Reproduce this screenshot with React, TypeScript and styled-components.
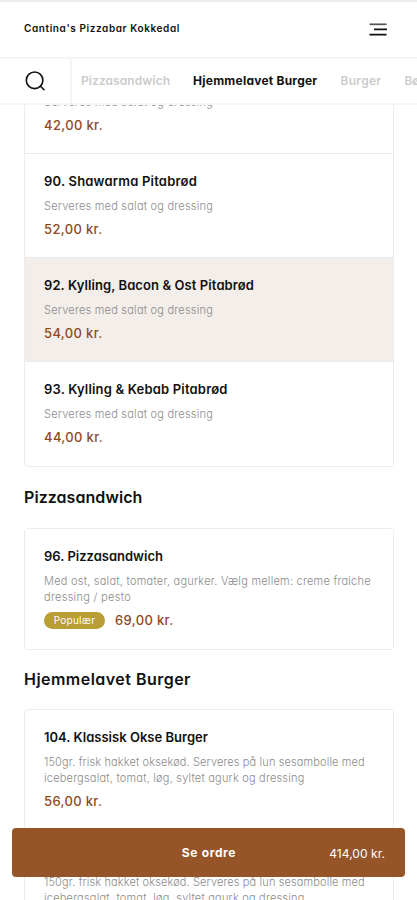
import React from 'react';
import styled, { createGlobalStyle } from 'styled-components';

const GlobalStyle = createGlobalStyle`
  * { box-sizing: border-box; }
  body {
    margin: 0;
    background: #fff;
    color: #111;
    font-family: Inter, "Open Sans", sans-serif;
    font-feature-settings: "cv11";
  }
  h1, h2, h3, p { margin: 0; white-space: nowrap; }
  button { font: inherit; font-feature-settings: inherit; border: 0; padding: 0; background: none; color: inherit; }
`;

const Page = styled.div`
  display: flex;
  flex-direction: column;
  height: 900px;
  overflow: hidden;
`;

const Header = styled.header`
  display: flex;
  flex: none;
  align-items: center;
  justify-content: space-between;
  height: 59px;
  padding: 0 30px 0 24px;
  border-top: 2px solid #ededed;
  border-bottom: 2px solid #f5f5f5;
`;

const Brand = styled.h1`
  font-size: 10px;
  line-height: 16px;
  font-weight: 600;
  letter-spacing: 0.6px;
  margin-bottom: 3px;
`;

const MenuButton = styled.button`
  display: flex;
`;

const CategoryBar = styled.nav`
  display: flex;
  flex: none;
  height: 46px;
  border-bottom: 2px solid #f5f5f5;
`;

const SearchButton = styled.button`
  display: flex;
  flex: none;
  align-items: center;
  width: 72px;
  padding-left: 24px;
  border-right: 2px solid #f5f5f5;
`;

const Tabs = styled.div`
  display: flex;
  align-items: center;
  gap: 23px;
  padding-left: 9px;
  overflow: hidden;
`;

const Tab = styled.a<{ $active?: boolean; $spacing?: number }>`
  flex: none;
  font-size: 12px;
  line-height: 18px;
  font-weight: ${(p) => (p.$active ? 700 : 600)};
  letter-spacing: ${(p) => p.$spacing ?? 0}px;
  color: ${(p) => (p.$active ? '#111' : '#cbcbcb')};
`;

const Menu = styled.main`
  flex: 1;
  min-height: 0;
  overflow: hidden;
  padding: 0 23px 0 24px;
`;

const Section = styled.section`
  &:first-child { margin-top: -56px; }
`;

const SectionTitle = styled.h2<{ $spacing: number; $compact?: boolean }>`
  padding: ${(p) => (p.$compact ? '17px 0 18px' : '18px 0 19px')};
  font-size: 16px;
  line-height: 24px;
  font-weight: 600;
  letter-spacing: ${(p) => p.$spacing}px;
`;

const Card = styled.div`
  border: 1px solid #ececec;
  border-radius: 4px;
  overflow: hidden;
`;

const Item = styled.article<{ $selected?: boolean }>`
  padding: 17px 19px 18px;
  background: ${(p) => (p.$selected ? '#f3eee9' : '#fff')};
  & + & { border-top: 1px solid #e9e9e9; }
  &:last-child { padding-bottom: 19px; }
`;

const ItemTitle = styled.h3<{ $spacing: number }>`
  font-size: 13px;
  line-height: 20px;
  font-weight: 600;
  letter-spacing: ${(p) => p.$spacing}px;
`;

const Description = styled.div`
  margin: 7px 0 5px;
`;

const DescriptionLine = styled.p<{ $spacing: number }>`
  font-size: 11px;
  line-height: 16px;
  font-weight: 300;
  letter-spacing: ${(p) => p.$spacing}px;
  color: #8b8b8b;
`;

const PriceRow = styled.div`
  display: flex;
  align-items: center;
  gap: 10px;
  height: 20px;
`;

const Badge = styled.span`
  width: 61px;
  height: 17px;
  border-radius: 9px;
  background: #b99d35;
  color: #fff;
  font-size: 10px;
  line-height: 17px;
  letter-spacing: 0.25px;
  text-align: center;
`;

const Price = styled.span`
  font-size: 13px;
  line-height: 20px;
  font-weight: 500;
  letter-spacing: 0.35px;
  color: #8f4821;
`;

const OrderBar = styled.button`
  position: fixed;
  left: 12px;
  right: 12px;
  bottom: 23px;
  display: grid;
  grid-template-columns: 1fr auto 1fr;
  align-items: center;
  height: 49px;
  padding: 0 20px;
  border-radius: 4px;
  background: #965429;
  color: #fff;
`;

const OrderLabel = styled.span`
  grid-column: 2;
  padding-left: 1px;
  font-size: 12px;
  font-weight: 700;
  letter-spacing: 0.65px;
`;

const OrderTotal = styled.span`
  justify-self: end;
  padding-top: 1px;
  font-size: 12px;
  font-weight: 400;
  letter-spacing: 0.05px;
`;

type Dish = {
  title: string;
  spacing: number;
  lines: [string, number][];
  price: string;
  selected?: boolean;
  popular?: boolean;
};

type Group = { heading?: string; spacing?: number; compact?: boolean; dishes: Dish[] };

const served: [string, number][] = [['Serveres med salat og dressing', 0.23]];
const burger: [string, number][] = [
  ['150gr. frisk hakket oksekød. Serveres på lun sesambolle med', 0.13],
  ['icebergsalat, tomat, løg, syltet agurk og dressing', 0.21],
];

const groups: Group[] = [
  {
    dishes: [
      { title: '89. Kebab Pitabrød', spacing: 0.2, lines: served, price: '42,00 kr.' },
      { title: '90. Shawarma Pitabrød', spacing: 0.2, lines: served, price: '52,00 kr.' },
      { title: '92. Kylling, Bacon & Ost Pitabrød', spacing: 0.09, lines: served, price: '54,00 kr.', selected: true },
      { title: '93. Kylling & Kebab Pitabrød', spacing: 0.18, lines: served, price: '44,00 kr.' },
    ],
  },
  {
    heading: 'Pizzasandwich',
    spacing: 0.06,
    dishes: [
      {
        title: '96. Pizzasandwich',
        spacing: 0,
        lines: [
          ['Med ost, salat, tomater, agurker. Vælg mellem: creme fraiche', 0.24],
          ['dressing / pesto', 0.3],
        ],
        price: '69,00 kr.',
        popular: true,
      },
    ],
  },
  {
    heading: 'Hjemmelavet Burger',
    spacing: 0.47,
    compact: true,
    dishes: [
      { title: '104. Klassisk Okse Burger', spacing: 0.02, lines: burger, price: '56,00 kr.' },
      { title: '105. Cheese Burger', spacing: 0.02, lines: burger, price: '59,00 kr.' },
    ],
  },
];

function SearchIcon() {
  return (
    <svg width="22" height="22" viewBox="0 0 22 22" fill="none" stroke="#111" strokeWidth="1.6" strokeLinecap="round">
      <circle cx="10.6" cy="10.3" r="8.3" />
      <path d="M16.5 16.2l3.5 3.5" />
    </svg>
  );
}

function MenuIcon() {
  return (
    <svg width="18" height="13" viewBox="0 0 18 13" fill="none" strokeWidth="1.7">
      <path d="M0.5 1.3h17" stroke="#555" />
      <path d="M5 6.3h13M0.5 11.6h17" stroke="#111" />
    </svg>
  );
}

function DishItem({ dish }: { dish: Dish }) {
  return (
    <Item $selected={dish.selected}>
      <ItemTitle $spacing={dish.spacing}>{dish.title}</ItemTitle>
      <Description>
        {dish.lines.map(([text, spacing]) => (
          <DescriptionLine key={text} $spacing={spacing}>{text}</DescriptionLine>
        ))}
      </Description>
      <PriceRow>
        {dish.popular && <Badge>Populær</Badge>}
        <Price>{dish.price}</Price>
      </PriceRow>
    </Item>
  );
}

export default function App() {
  return (
    <Page>
      <GlobalStyle />
      <Header>
        <Brand>Cantina's Pizzabar Kokkedal</Brand>
        <MenuButton aria-label="Menu"><MenuIcon /></MenuButton>
      </Header>
      <CategoryBar>
        <SearchButton aria-label="Søg"><SearchIcon /></SearchButton>
        <Tabs>
          <Tab $spacing={0.07}>Pizzasandwich</Tab>
          <Tab $active $spacing={0.23}>Hjemmelavet Burger</Tab>
          <Tab $spacing={0.3}>Burger</Tab>
          <Tab>Børn</Tab>
        </Tabs>
      </CategoryBar>
      <Menu>
        {groups.map((group, i) => (
          <Section key={i}>
            {group.heading && (
              <SectionTitle $spacing={group.spacing ?? 0} $compact={group.compact}>{group.heading}</SectionTitle>
            )}
            <Card>
              {group.dishes.map((dish) => <DishItem key={dish.title} dish={dish} />)}
            </Card>
          </Section>
        ))}
      </Menu>
      <OrderBar>
        <OrderLabel>Se ordre</OrderLabel>
        <OrderTotal>414,00 kr.</OrderTotal>
      </OrderBar>
    </Page>
  );
}
